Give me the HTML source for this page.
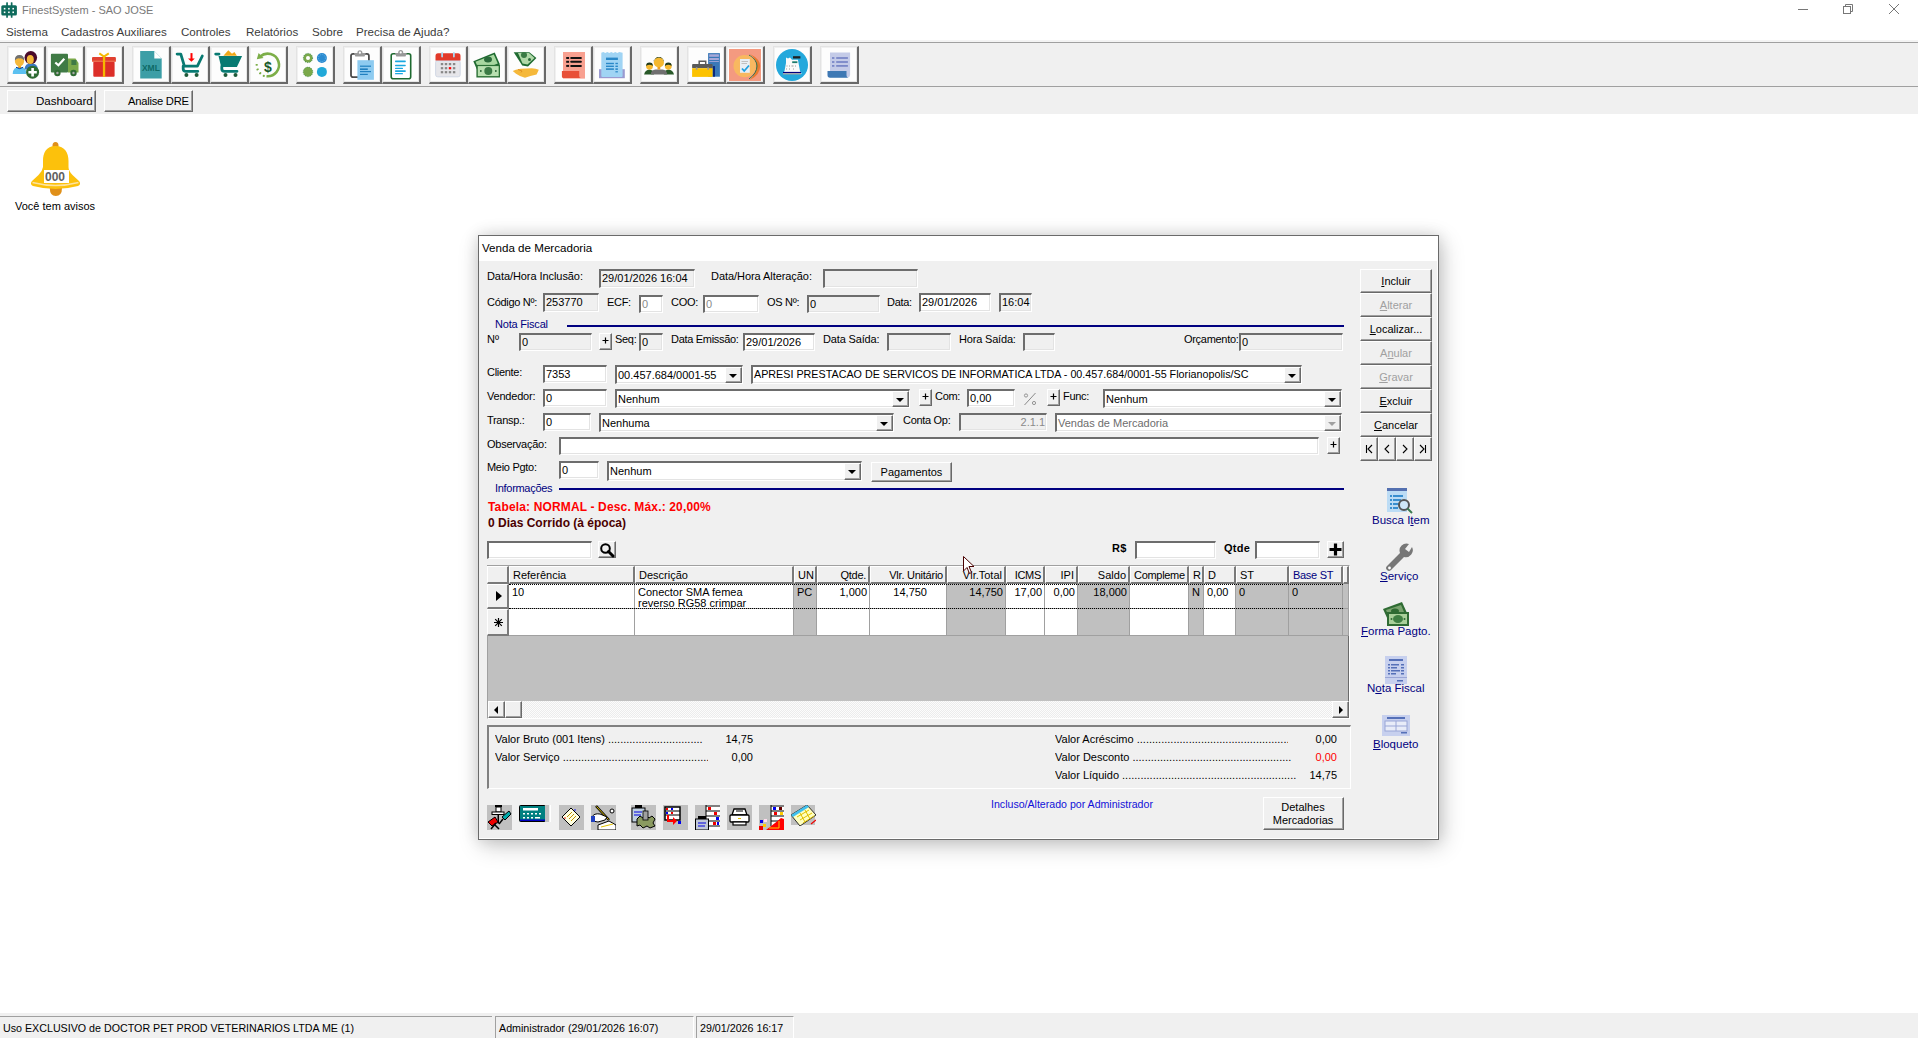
<!DOCTYPE html><html><head><meta charset="utf-8"><style>
html,body{margin:0;padding:0;}
body{width:1918px;height:1038px;position:relative;overflow:hidden;background:#fff;font-family:"Liberation Sans",sans-serif;}
.a{position:absolute;box-sizing:border-box;}
.t{position:absolute;white-space:nowrap;font-family:"Liberation Sans",sans-serif;}
.ed{position:absolute;box-sizing:border-box;border-style:solid;border-width:2px 1px 1px 2px;border-color:#6d6d6d #fff #fff #6d6d6d;box-shadow:inset -1px -1px 0 #e3e3e3;}
.rb{position:absolute;box-sizing:border-box;border-style:solid;border-width:1px;border-color:#fff #696969 #696969 #fff;box-shadow:inset -1px -1px 0 #a0a0a0;}
</style></head><body>
<div class="a" style="left:0px;top:0px;width:1918px;height:42px;background:#fff"></div>
<div class="t" style="left:22px;top:4px;font-size:11px;line-height:13px;color:#7a7a7a;">FinestSystem - SAO JOSE</div>
<div class="t" style="left:6px;top:25px;font-size:11.6px;line-height:13px;color:#3c3c3c;">Sistema</div>
<div class="t" style="left:61px;top:25px;font-size:11.6px;line-height:13px;color:#3c3c3c;">Cadastros Auxiliares</div>
<div class="t" style="left:181px;top:25px;font-size:11.6px;line-height:13px;color:#3c3c3c;">Controles</div>
<div class="t" style="left:246px;top:25px;font-size:11.6px;line-height:13px;color:#3c3c3c;">Relatórios</div>
<div class="t" style="left:312px;top:25px;font-size:11.6px;line-height:13px;color:#3c3c3c;">Sobre</div>
<div class="t" style="left:356px;top:25px;font-size:11.6px;line-height:13px;color:#3c3c3c;">Precisa de Ajuda?</div>
<div class="a" style="left:0px;top:40px;width:1918px;height:2px;background:#f4f4f4"></div>
<div class="a" style="left:0px;top:42px;width:1918px;height:1px;background:#a0a0a0"></div>
<div class="a" style="left:0px;top:43px;width:1918px;height:43px;background:#f0f0f0"></div>
<div class="a" style="left:0px;top:86px;width:1918px;height:1px;background:#a0a0a0"></div>
<div class="a" style="left:0px;top:87px;width:1918px;height:27px;background:#f0f0f0"></div>
<div class="a" style="left:7px;top:46px;width:39px;height:38px;background:#fdfdfd;border-style:solid;border-width:1px 2px 2px 1px;border-color:#e3e3e3 #696969 #696969 #e3e3e3;box-shadow:inset -1px -1px 0 #e6e6e6, inset 1px 1px 0 #f0f0f0"></div>
<svg class="a" style="left:10px;top:49px" width="32" height="32" viewBox="0 0 32 32"><path d="M2.7 25 Q2.7 18 9.6 18 Q16.5 18 16.5 25 Z" fill="#5bc0f0"/><rect x="8.3" y="16" width="2.6" height="3" fill="#f5a010"/><path d="M6 18.3 Q9.6 21 13.2 18.3" stroke="#0a3a90" stroke-width="1" fill="none"/>
<ellipse cx="9.5" cy="12" rx="4.6" ry="5.4" fill="#f5b83a"/><path d="M4.9 11.5 Q4.6 6 9.5 6 Q14.4 6 14.1 11.5 Q12 8.8 9.5 9.4 Q7 8.8 4.9 11.5 Z" fill="#6f6f6f"/>
<path d="M14.5 20.4 Q14.8 14.3 21 14.3 Q27.6 14.3 27.9 20.4 Z" fill="#3a7ac0"/>
<ellipse cx="20.8" cy="8.6" rx="6.3" ry="6.5" fill="#4a0a2a"/><ellipse cx="20.3" cy="10.5" rx="3.5" ry="4.6" fill="#f5b83a"/>
<circle cx="22.6" cy="23.2" r="6.5" fill="#2f6b33"/><path d="M22.6 19 V27.4 M18.4 23.2 H26.8" stroke="#fff" stroke-width="2.6"/></svg>
<div class="a" style="left:46px;top:46px;width:39px;height:38px;background:#fdfdfd;border-style:solid;border-width:1px 2px 2px 1px;border-color:#e3e3e3 #696969 #696969 #e3e3e3;box-shadow:inset -1px -1px 0 #e6e6e6, inset 1px 1px 0 #f0f0f0"></div>
<svg class="a" style="left:49px;top:49px" width="32" height="32" viewBox="0 0 32 32"><rect x="1.9" y="4.7" width="17.1" height="18.9" rx="1" fill="#3f7a45"/><path d="M19 9.4 H26.5 L29.5 14 V23.6 H19 Z" fill="#7aa84a"/><rect x="22.4" y="11" width="5" height="5" fill="#3f7a45"/>
<circle cx="8.4" cy="24" r="3.2" fill="#2f6b33"/><circle cx="8.4" cy="24" r="1.2" fill="#aaa"/><circle cx="24.5" cy="24" r="3.2" fill="#2f6b33"/><circle cx="24.5" cy="24" r="1.2" fill="#aaa"/>
<path d="M6.3 13.5 L9.4 16.3 L15.3 9.8" stroke="#fff" stroke-width="2.2" fill="none"/></svg>
<div class="a" style="left:85px;top:46px;width:39px;height:38px;background:#fdfdfd;border-style:solid;border-width:1px 2px 2px 1px;border-color:#e3e3e3 #696969 #696969 #e3e3e3;box-shadow:inset -1px -1px 0 #e6e6e6, inset 1px 1px 0 #f0f0f0"></div>
<svg class="a" style="left:88px;top:49px" width="32" height="32" viewBox="0 0 32 32"><rect x="5.3" y="12.8" width="21.3" height="15" rx="1" fill="#dc2e28"/><rect x="4" y="7.9" width="23.9" height="4.9" rx="1" fill="#e04030"/><rect x="4" y="11.6" width="23.9" height="1" fill="#f0704a"/>
<rect x="14.9" y="7" width="2.3" height="20.8" fill="#f5b800"/><path d="M11.3 4.3 L16 7.5 L20.8 4.3" stroke="#f5b800" stroke-width="2" fill="none"/></svg>
<div class="a" style="left:132px;top:46px;width:39px;height:38px;background:#fdfdfd;border-style:solid;border-width:1px 2px 2px 1px;border-color:#e3e3e3 #696969 #696969 #e3e3e3;box-shadow:inset -1px -1px 0 #e6e6e6, inset 1px 1px 0 #f0f0f0"></div>
<svg class="a" style="left:135px;top:49px" width="32" height="32" viewBox="0 0 32 32"><path d="M5.2 2 H19.3 L26.7 9.5 V29.6 H5.2 Z" fill="#3c9ea6"/><path d="M19.3 2 V9.5 H26.7 Z" fill="#fff"/>
<text x="15.9" y="22" font-family="Liberation Sans" font-weight="bold" font-size="8.5" text-anchor="middle" fill="#0e6a66">XML</text></svg>
<div class="a" style="left:171px;top:46px;width:39px;height:38px;background:#fdfdfd;border-style:solid;border-width:1px 2px 2px 1px;border-color:#e3e3e3 #696969 #696969 #e3e3e3;box-shadow:inset -1px -1px 0 #e6e6e6, inset 1px 1px 0 #f0f0f0"></div>
<svg class="a" style="left:174px;top:49px" width="32" height="32" viewBox="0 0 32 32"><path d="M3.1 5.1 H6.8 L10.4 17.1 H23.4 L28.3 7" stroke="#087a72" stroke-width="2.8" fill="none" stroke-linecap="round" stroke-linejoin="round"/>
<path d="M9.2 17.1 V20 Q9.2 22.3 12 22.3 H23.8" stroke="#087a72" stroke-width="2.8" fill="none" stroke-linecap="round"/>
<circle cx="12.4" cy="26" r="2" fill="#1e5a3a"/><circle cx="22.6" cy="26" r="2" fill="#1e5a3a"/>
<rect x="16.5" y="4.1" width="2" height="6" fill="#f00"/><path d="M14 9.4 H20.8 L17.4 12.7 Z" fill="#f00"/></svg>
<div class="a" style="left:210px;top:46px;width:39px;height:38px;background:#fdfdfd;border-style:solid;border-width:1px 2px 2px 1px;border-color:#e3e3e3 #696969 #696969 #e3e3e3;box-shadow:inset -1px -1px 0 #e6e6e6, inset 1px 1px 0 #f0f0f0"></div>
<svg class="a" style="left:213px;top:49px" width="32" height="32" viewBox="0 0 32 32"><path d="M10.4 6.8 L15.3 1.3 L19 4.7 L21.4 3.1 L23.9 6.8 Z" fill="#f0a818"/>
<path d="M2.7 5.1 H6" stroke="#087a72" stroke-width="2.8" stroke-linecap="round"/><path d="M5.5 7 H29.1 L23.9 18 H8.2 Z" fill="#087a72"/>
<path d="M8.8 17.5 V20 Q8.8 22.3 11.6 22.3 H24" stroke="#087a72" stroke-width="2.8" fill="none" stroke-linecap="round"/>
<circle cx="12.5" cy="26" r="2" fill="#1e5a3a"/><circle cx="22.5" cy="26" r="2" fill="#1e5a3a"/></svg>
<div class="a" style="left:249px;top:46px;width:39px;height:38px;background:#fdfdfd;border-style:solid;border-width:1px 2px 2px 1px;border-color:#e3e3e3 #696969 #696969 #e3e3e3;box-shadow:inset -1px -1px 0 #e6e6e6, inset 1px 1px 0 #f0f0f0"></div>
<svg class="a" style="left:252px;top:49px" width="32" height="32" viewBox="0 0 32 32"><path d="M8.2 7.5 A11.3 11.3 0 1 1 14.5 27.2" stroke="#7cae48" stroke-width="2.6" fill="none"/>
<path d="M4.8 10.3 L6.6 4 L11.5 9 Z" fill="#7cae48"/>
<g fill="#7cae48"><rect x="3.5" y="15" width="2.4" height="1.8" rx="0.8"/><rect x="4.4" y="19.5" width="2.4" height="1.8" rx="0.8" transform="rotate(-20 5.6 20.4)"/><rect x="7" y="23.3" width="2.4" height="1.8" rx="0.8" transform="rotate(-40 8.2 24.2)"/><rect x="10.8" y="25.8" width="2" height="2.2" rx="0.8" transform="rotate(-65 11.8 26.9)"/></g>
<text x="15.8" y="22.5" font-family="Liberation Sans" font-weight="bold" font-size="14" text-anchor="middle" fill="#1a5a2a">$</text></svg>
<div class="a" style="left:296px;top:46px;width:39px;height:38px;background:#fdfdfd;border-style:solid;border-width:1px 2px 2px 1px;border-color:#e3e3e3 #696969 #696969 #e3e3e3;box-shadow:inset -1px -1px 0 #e6e6e6, inset 1px 1px 0 #f0f0f0"></div>
<svg class="a" style="left:299px;top:49px" width="32" height="32" viewBox="0 0 32 32"><circle cx="9" cy="9" r="4.6" fill="#7aa84a" stroke="#1e7a3a" stroke-width="0.8" stroke-dasharray="1 1.3"/><circle cx="9" cy="9" r="2" fill="#fff"/>
<circle cx="22.9" cy="9" r="5" fill="#2a8ad0"/><circle cx="22.9" cy="9" r="3.5" fill="none" stroke="#7cc8f0" stroke-width="0.8" stroke-dasharray="0.8 1.2"/>
<circle cx="9" cy="22.9" r="4.8" fill="#7aa84a" stroke="#1e7a3a" stroke-width="0.6" stroke-dasharray="1 1.3"/>
<circle cx="22.9" cy="22.9" r="5" fill="#20a8d8"/></svg>
<div class="a" style="left:343px;top:46px;width:39px;height:38px;background:#fdfdfd;border-style:solid;border-width:1px 2px 2px 1px;border-color:#e3e3e3 #696969 #696969 #e3e3e3;box-shadow:inset -1px -1px 0 #e6e6e6, inset 1px 1px 0 #f0f0f0"></div>
<svg class="a" style="left:346px;top:49px" width="32" height="32" viewBox="0 0 32 32"><rect x="5" y="4.8" width="17.9" height="23.4" rx="2" fill="#fff" stroke="#4a4a4a" stroke-width="1.8"/>
<path d="M8 4.1 H19.8 L18.5 7.6 H9.3 Z" fill="#999"/><circle cx="13.9" cy="3.7" r="2.5" fill="#999"/><circle cx="13.9" cy="3.7" r="1.1" fill="#fff"/>
<rect x="11.4" y="11.2" width="16.5" height="19.6" fill="#8ecbf0"/>
<g fill="#2080c0"><rect x="14" y="16.6" width="11" height="1.2"/><rect x="14" y="19.4" width="7.8" height="1.6"/><rect x="14" y="22" width="11" height="1.2"/><rect x="14" y="24.8" width="7.8" height="1.2"/></g></svg>
<div class="a" style="left:382px;top:46px;width:39px;height:38px;background:#fdfdfd;border-style:solid;border-width:1px 2px 2px 1px;border-color:#e3e3e3 #696969 #696969 #e3e3e3;box-shadow:inset -1px -1px 0 #e6e6e6, inset 1px 1px 0 #f0f0f0"></div>
<svg class="a" style="left:385px;top:49px" width="32" height="32" viewBox="0 0 32 32"><rect x="6.2" y="4.7" width="19.5" height="25" rx="2" fill="#fff" stroke="#1e6a30" stroke-width="1.6"/>
<path d="M10 4.1 H21.8 L20.5 7.6 H11.3 Z" fill="#999"/><circle cx="15.7" cy="3.4" r="2.5" fill="#999"/><circle cx="15.7" cy="3.4" r="1.1" fill="#fff"/>
<g fill="#1aa8e0"><rect x="10" y="11.6" width="10.8" height="1.6" rx="0.6"/><rect x="10" y="15.8" width="10.8" height="1.4" rx="0.6"/><rect x="10" y="18.8" width="8" height="1.2" rx="0.6"/><rect x="10" y="21.3" width="10.8" height="1.6" rx="0.6"/><rect x="10" y="24.1" width="8" height="1.2" rx="0.6"/></g></svg>
<div class="a" style="left:429px;top:46px;width:39px;height:38px;background:#fdfdfd;border-style:solid;border-width:1px 2px 2px 1px;border-color:#e3e3e3 #696969 #696969 #e3e3e3;box-shadow:inset -1px -1px 0 #e6e6e6, inset 1px 1px 0 #f0f0f0"></div>
<svg class="a" style="left:432px;top:49px" width="32" height="32" viewBox="0 0 32 32"><rect x="3.6" y="11.4" width="24.6" height="16.4" rx="2" fill="#e6e6ea" stroke="#c8d0e0" stroke-width="0.8"/><rect x="3.6" y="11.4" width="24.6" height="1" fill="#d0e4f4"/>
<path d="M3.5 11.4 V7 Q3.5 4.3 6 4.3 H26 Q28.5 4.3 28.5 7 V11.4 Z" fill="#e23a2a"/>
<rect x="9.2" y="3" width="1.8" height="5.4" rx="0.9" fill="#a8d8f0"/><rect x="21" y="3" width="1.8" height="5.4" rx="0.9" fill="#a8d8f0"/>
<g fill="#888"><rect x="8.8" y="14" width="2.4" height="2.2"/><rect x="12.8" y="14" width="2.4" height="2.2"/><rect x="16.8" y="14" width="2.4" height="2.2"/><rect x="20.9" y="14" width="2.4" height="2.2"/>
<rect x="8.8" y="18.1" width="2.4" height="2.2"/><rect x="12.8" y="18.1" width="2.4" height="2.2"/><rect x="20.9" y="18.1" width="2.4" height="2.2"/>
<rect x="8.8" y="22.1" width="2.4" height="2.2"/><rect x="12.8" y="22.1" width="2.4" height="2.2"/><rect x="16.8" y="22.1" width="2.4" height="2.2"/><rect x="20.9" y="22.1" width="2.4" height="2.2"/></g>
<rect x="16.8" y="18.1" width="2.4" height="2.2" fill="#f00"/></svg>
<div class="a" style="left:468px;top:46px;width:39px;height:38px;background:#fdfdfd;border-style:solid;border-width:1px 2px 2px 1px;border-color:#e3e3e3 #696969 #696969 #e3e3e3;box-shadow:inset -1px -1px 0 #e6e6e6, inset 1px 1px 0 #f0f0f0"></div>
<svg class="a" style="left:471px;top:49px" width="32" height="32" viewBox="0 0 32 32"><path d="M2.3 12.3 L23.7 3.5 L29 15.5 L7.6 24.3 Z" fill="#1e6a30"/><path d="M4.5 12.8 L22.8 5.5 L26.8 14.6 L8.5 21.9 Z" fill="#a8d8a0"/><ellipse cx="17" cy="10.5" rx="4" ry="3" fill="#2a6a3a"/>
<rect x="5.4" y="15.9" width="23.6" height="12.6" fill="#2a7035"/><rect x="6.8" y="17.1" width="20.9" height="10" fill="#b8e0b0"/><circle cx="17.3" cy="22" r="4" fill="#3a7a45"/>
<rect x="9" y="21.2" width="1.6" height="1.6" fill="#1e5a2a"/><rect x="24" y="21.2" width="1.6" height="1.6" fill="#1e5a2a"/></svg>
<div class="a" style="left:507px;top:46px;width:39px;height:38px;background:#fdfdfd;border-style:solid;border-width:1px 2px 2px 1px;border-color:#e3e3e3 #696969 #696969 #e3e3e3;box-shadow:inset -1px -1px 0 #e6e6e6, inset 1px 1px 0 #f0f0f0"></div>
<svg class="a" style="left:510px;top:49px" width="32" height="32" viewBox="0 0 32 32"><path d="M3.7 3.2 L19.4 3.2 L26.4 9 L18 17.5 L12.2 16.4 Z" fill="#1e6a30"/><path d="M8 4 L19 4 L24.5 9 L17.5 15.5 L12.5 14.5 Z" fill="#b0d8a8"/><circle cx="14" cy="6" r="3" fill="#3a7a45"/><circle cx="19.5" cy="10.5" r="1.5" fill="#2a6a3a"/>
<path d="M2.8 22 Q5 20.5 10.5 19.8 L21.7 19.3 Q26 19.5 28.8 20.7 L26.6 25.6 Q20 27 15 28.7 Q9 27 6 24.7 Z" fill="#f5b83a"/><path d="M8 20.5 L12 22 L11 23.5" stroke="#e09020" stroke-width="1" fill="none"/></svg>
<div class="a" style="left:554px;top:46px;width:39px;height:38px;background:#fdfdfd;border-style:solid;border-width:1px 2px 2px 1px;border-color:#e3e3e3 #696969 #696969 #e3e3e3;box-shadow:inset -1px -1px 0 #e6e6e6, inset 1px 1px 0 #f0f0f0"></div>
<svg class="a" style="left:557px;top:49px" width="32" height="32" viewBox="0 0 32 32"><rect x="6" y="3" width="22" height="26.6" fill="#f8a090"/><path d="M4.9 22 H22.2 V27 Q22.2 29 24 29 H6.5 Q4.9 29 4.9 27.5 Z" fill="#e85038"/>
<g fill="#111"><rect x="9.2" y="8" width="2.9" height="2"/><rect x="13.2" y="8" width="11.7" height="2" rx="1"/><rect x="9.2" y="11.8" width="2.9" height="2"/><rect x="13.2" y="11.8" width="11.7" height="2" rx="1"/><rect x="9.2" y="15.9" width="2.9" height="2"/><rect x="13.2" y="15.9" width="11.7" height="2" rx="1"/></g></svg>
<div class="a" style="left:593px;top:46px;width:39px;height:38px;background:#fdfdfd;border-style:solid;border-width:1px 2px 2px 1px;border-color:#e3e3e3 #696969 #696969 #e3e3e3;box-shadow:inset -1px -1px 0 #e6e6e6, inset 1px 1px 0 #f0f0f0"></div>
<svg class="a" style="left:596px;top:49px" width="32" height="32" viewBox="0 0 32 32"><rect x="3" y="20.2" width="25.8" height="9" fill="#9a9ad0"/>
<path d="M5.3 3.8 L7.3 3 L9.3 4 L11.3 3 L13.3 4 L15.3 3 L17.3 4 L19.3 3 L21.3 4 L23.3 3 L26.6 3.8 V27 Q26.6 28 25.6 28 H6.3 Q5.3 28 5.3 27 Z" fill="#a0d4f4"/>
<g fill="#2a88c8"><rect x="10" y="8.6" width="11.9" height="2.4"/><rect x="10" y="13.8" width="7.9" height="1.4"/><rect x="19.4" y="13.8" width="2.5" height="1.4"/><rect x="10" y="16.6" width="7.9" height="1.4"/><rect x="19.4" y="16.6" width="2.5" height="1.4"/><rect x="10" y="19.3" width="7.9" height="1.6"/><rect x="19.4" y="19.3" width="2.5" height="1.6"/><rect x="19.4" y="22.2" width="2.5" height="1.2"/></g></svg>
<div class="a" style="left:640px;top:46px;width:39px;height:38px;background:#fdfdfd;border-style:solid;border-width:1px 2px 2px 1px;border-color:#e3e3e3 #696969 #696969 #e3e3e3;box-shadow:inset -1px -1px 0 #e6e6e6, inset 1px 1px 0 #f0f0f0"></div>
<svg class="a" style="left:643px;top:49px" width="32" height="32" viewBox="0 0 32 32"><path d="M1.1 25.6 Q2 21 6.5 20.5 Q10 21 11 23 V25.6 Z" fill="#2a5a2a"/><path d="M20.9 23 Q22 21 25.3 20.5 Q30 21 31 25.6 H20.9 Z" fill="#2a5a2a"/>
<circle cx="6.5" cy="17.3" r="3.4" fill="#f5b830"/><path d="M3.1 17 A3.4 3.4 0 0 1 9.9 17 Q6.5 14.5 3.1 17 Z" fill="#1e3a1e"/>
<circle cx="25.3" cy="17.3" r="3.4" fill="#f5b830"/><path d="M21.9 17 A3.4 3.4 0 0 1 28.7 17 Q25.3 14.5 21.9 17 Z" fill="#1e3a1e"/>
<path d="M7.8 25.6 Q8 21 12.5 20.5 H19.5 Q24 21 24.2 25.6 Z" fill="#707070"/>
<circle cx="15.9" cy="13.4" r="5.1" fill="#f5b830"/><path d="M10.8 13 A5.1 5.1 0 0 1 21 13 L21 11 Q16 6 10.8 11 Z" fill="#1e3a1e"/><rect x="14.5" y="18" width="2.8" height="2.5" fill="#f0a020"/></svg>
<div class="a" style="left:687px;top:46px;width:39px;height:38px;background:#fdfdfd;border-style:solid;border-width:1px 2px 2px 1px;border-color:#e3e3e3 #696969 #696969 #e3e3e3;box-shadow:inset -1px -1px 0 #e6e6e6, inset 1px 1px 0 #f0f0f0"></div>
<svg class="a" style="left:690px;top:49px" width="32" height="32" viewBox="0 0 32 32"><rect x="18.1" y="4.1" width="11.8" height="23.6" fill="#3a78b8"/><g fill="#a8a8d8"><rect x="19.2" y="5.3" width="9.7" height="2.5"/><rect x="19.2" y="9" width="9.7" height="2"/><rect x="19.2" y="12" width="9.7" height="0.9"/></g><rect x="23" y="17.1" width="2" height="10.6" fill="#0a2a80"/>
<path d="M9.2 15.1 V12.3 H15.7 V15.1" stroke="#5a5a5a" stroke-width="1.5" fill="none"/><rect x="2.1" y="15.1" width="20.5" height="4.1" rx="0.8" fill="#5a5a5a"/><rect x="2.1" y="19.2" width="20.5" height="8.7" fill="#fcc200"/>
<rect x="5.8" y="18.3" width="1.6" height="2.5" fill="#999"/><rect x="17.3" y="18.3" width="1.6" height="2.5" fill="#999"/></svg>
<div class="a" style="left:726px;top:46px;width:39px;height:38px;background:#fdfdfd;border-style:solid;border-width:1px 2px 2px 1px;border-color:#e3e3e3 #696969 #696969 #e3e3e3;box-shadow:inset -1px -1px 0 #e6e6e6, inset 1px 1px 0 #f0f0f0"></div>
<svg class="a" style="left:729px;top:49px" width="32" height="32" viewBox="0 0 32 32"><rect x="0" y="0" width="32" height="32" fill="#f49a80"/>
<path d="M21 5 Q31 10 31.2 17 Q31 26 21 31 Q27 24 27.5 17 Q27 10 21 5 Z" fill="#e87a30"/><path d="M20 6 Q28 11 28 17 Q28 24 20 30" stroke="#2a7a50" stroke-width="1" fill="none"/>
<circle cx="15.7" cy="17.1" r="11.2" fill="#f8b860"/>
<rect x="11" y="10" width="9.8" height="13.8" fill="#e8eef4"/><path d="M12.5 12.5 H19 M12.5 14.5 H18" stroke="#c0c0c0" stroke-width="1"/>
<path d="M13 19.5 L15.2 22 L20 16.5" stroke="#20a0e0" stroke-width="1.8" fill="none"/></svg>
<div class="a" style="left:773px;top:46px;width:39px;height:38px;background:#fdfdfd;border-style:solid;border-width:1px 2px 2px 1px;border-color:#e3e3e3 #696969 #696969 #e3e3e3;box-shadow:inset -1px -1px 0 #e6e6e6, inset 1px 1px 0 #f0f0f0"></div>
<svg class="a" style="left:776px;top:49px" width="32" height="32" viewBox="0 0 32 32"><circle cx="16" cy="16" r="16" fill="#24a8dc"/>
<path d="M10 8.6 L12 9.5 L14 8.5 L16 10.8 L21.9 10.8 L24 22 L25.7 25 H7 L8.5 22 L10 14 Z" fill="#fafafa"/>
<rect x="17" y="7.2" width="7.4" height="2.3" fill="#202020"/><rect x="16.2" y="12.3" width="5.2" height="1.8" fill="#1e7a6a"/>
<g fill="#999"><rect x="10.5" y="16.5" width="1" height="1"/><rect x="13" y="16.5" width="1" height="1"/><rect x="15.5" y="16.5" width="2" height="1"/><rect x="19" y="16.5" width="1" height="1"/><rect x="10" y="19.5" width="1" height="1"/><rect x="13" y="19.5" width="1" height="1"/><rect x="17" y="19.5" width="1" height="1"/></g>
<rect x="7" y="22.9" width="18" height="1.3" fill="#000080"/><rect x="7" y="24.2" width="18" height="1.3" fill="#a0a0a0"/></svg>
<div class="a" style="left:820px;top:46px;width:39px;height:38px;background:#fdfdfd;border-style:solid;border-width:1px 2px 2px 1px;border-color:#e3e3e3 #696969 #696969 #e3e3e3;box-shadow:inset -1px -1px 0 #e6e6e6, inset 1px 1px 0 #f0f0f0"></div>
<svg class="a" style="left:823px;top:49px" width="32" height="32" viewBox="0 0 32 32"><path d="M7 3.4 H27.1 V26 Q27.1 28.3 24.8 28.3 H7 Z" fill="#c4cbe8"/><path d="M4.5 22 H23.5 V26 Q23.5 28.7 26 28.7 H7 Q4.5 28.7 4.5 26 Z" fill="#3e78b4"/>
<g fill="#7a88c8"><rect x="9" y="8.1" width="2.4" height="1.8"/><rect x="13.2" y="8.1" width="11.7" height="1.8"/><rect x="9" y="12.1" width="2.4" height="1.8"/><rect x="13.2" y="12.1" width="11.7" height="1.8"/><rect x="9" y="16" width="2.4" height="1.8"/><rect x="13.2" y="16" width="11.7" height="1.8"/></g></svg>
<div class="rb" style="left:7px;top:90px;width:89px;height:22px;background:#f0f0f0"></div>
<div class="t" style="left:36px;top:94px;font-size:11.6px;line-height:13px;color:#000;">Dashboard</div>
<div class="rb" style="left:104px;top:90px;width:89px;height:22px;background:#f0f0f0"></div>
<div class="t" style="left:128px;top:95px;font-size:11.2px;line-height:13px;color:#000;letter-spacing:-0.25px;">Analise DRE</div>
<div class="a" style="left:0px;top:1013px;width:1918px;height:25px;background:#f0f0f0"></div>
<div class="a" style="left:478px;top:235px;width:961px;height:605px;background:#f0f0f0;border:1px solid #6a6a6a;box-shadow:0 0 14px rgba(0,0,0,0.13), 3px 6px 22px rgba(0,0,0,0.2)"></div>
<div class="a" style="left:479px;top:236px;width:959px;height:603px;border-right:1px solid #fff;border-bottom:1px solid #fff"></div>
<div class="a" style="left:479px;top:236px;width:959px;height:25px;background:#fff"></div>
<div class="t" style="left:482px;top:241px;font-size:11.6px;line-height:13px;color:#000;">Venda de Mercadoria</div>
<div class="t" style="left:487px;top:270px;font-size:11px;line-height:13px;color:#000;letter-spacing:-0.07px;">Data/Hora Inclusão:</div>
<div class="ed" style="left:599px;top:269px;width:96px;height:19px;background:#f0f0f0"></div>
<div class="t" style="left:602px;top:272px;font-size:11px;line-height:13px;color:#000;">29/01/2026 16:04</div>
<div class="t" style="left:711px;top:270px;font-size:11px;line-height:13px;color:#000;letter-spacing:-0.06px;">Data/Hora Alteração:</div>
<div class="ed" style="left:823px;top:269px;width:95px;height:19px;background:#f0f0f0"></div>
<div class="t" style="left:487px;top:296px;font-size:11px;line-height:13px;color:#000;letter-spacing:-0.30px;">Código Nº:</div>
<div class="ed" style="left:543px;top:293px;width:56px;height:19px;background:#f0f0f0"></div>
<div class="t" style="left:546px;top:296px;font-size:11px;line-height:13px;color:#000;">253770</div>
<div class="t" style="left:607px;top:296px;font-size:11px;line-height:13px;color:#000;letter-spacing:-0.30px;">ECF:</div>
<div class="ed" style="left:639px;top:295px;width:24px;height:18px;background:#fff"></div>
<div class="t" style="left:642px;top:298px;font-size:11px;line-height:13px;color:#8a8a8a;">0</div>
<div class="t" style="left:671px;top:296px;font-size:11px;line-height:13px;color:#000;letter-spacing:-0.30px;">COO:</div>
<div class="ed" style="left:703px;top:295px;width:56px;height:18px;background:#fff"></div>
<div class="t" style="left:706px;top:298px;font-size:11px;line-height:13px;color:#8a8a8a;">0</div>
<div class="t" style="left:767px;top:296px;font-size:11px;line-height:13px;color:#000;letter-spacing:-0.30px;">OS Nº:</div>
<div class="ed" style="left:807px;top:295px;width:73px;height:18px;background:#f0f0f0"></div>
<div class="t" style="left:810px;top:298px;font-size:11px;line-height:13px;color:#000;">0</div>
<div class="t" style="left:887px;top:296px;font-size:11px;line-height:13px;color:#000;letter-spacing:-0.30px;">Data:</div>
<div class="ed" style="left:919px;top:293px;width:72px;height:19px;background:#fff"></div>
<div class="t" style="left:922px;top:296px;font-size:11px;line-height:13px;color:#000;">29/01/2026</div>
<div class="ed" style="left:999px;top:293px;width:33px;height:19px;background:#f0f0f0"></div>
<div class="t" style="left:1002px;top:296px;font-size:11px;line-height:13px;color:#000;">16:04</div>
<div class="t" style="left:495px;top:318px;font-size:11px;line-height:13px;color:#000080;letter-spacing:-0.20px;">Nota Fiscal</div>
<div class="a" style="left:567px;top:325px;width:777px;height:2px;background:#000080"></div>
<div class="t" style="left:487px;top:333px;font-size:11px;line-height:13px;color:#000;">Nº</div>
<div class="ed" style="left:519px;top:333px;width:73px;height:18px;background:#f0f0f0"></div>
<div class="t" style="left:522px;top:336px;font-size:11px;line-height:13px;color:#000;">0</div>
<div class="rb" style="left:599px;top:333px;width:13px;height:17px;background:#f0f0f0"></div>
<svg class="a" style="left:602px;top:337px" width="7" height="7" viewBox="0 0 7 7"><path d="M3.5 0.5 V6.5 M0.5 3.5 H6.5" stroke="#000" stroke-width="1.2"/></svg>
<div class="t" style="left:615px;top:333px;font-size:11px;line-height:13px;color:#000;letter-spacing:-0.30px;">Seq:</div>
<div class="ed" style="left:639px;top:333px;width:24px;height:18px;background:#f0f0f0"></div>
<div class="t" style="left:642px;top:336px;font-size:11px;line-height:13px;color:#000;">0</div>
<div class="t" style="left:671px;top:333px;font-size:11px;line-height:13px;color:#000;letter-spacing:-0.30px;">Data Emissão:</div>
<div class="ed" style="left:743px;top:333px;width:72px;height:18px;background:#fff"></div>
<div class="t" style="left:746px;top:336px;font-size:11px;line-height:13px;color:#000;">29/01/2026</div>
<div class="t" style="left:823px;top:333px;font-size:11px;line-height:13px;color:#000;letter-spacing:-0.16px;">Data Saída:</div>
<div class="ed" style="left:887px;top:333px;width:64px;height:18px;background:#f0f0f0"></div>
<div class="t" style="left:959px;top:333px;font-size:11px;line-height:13px;color:#000;letter-spacing:-0.18px;">Hora Saída:</div>
<div class="ed" style="left:1023px;top:333px;width:32px;height:18px;background:#f0f0f0"></div>
<div class="t" style="left:1184px;top:333px;font-size:11px;line-height:13px;color:#000;letter-spacing:-0.30px;">Orçamento:</div>
<div class="ed" style="left:1239px;top:333px;width:104px;height:18px;background:#f0f0f0"></div>
<div class="t" style="left:1242px;top:336px;font-size:11px;line-height:13px;color:#000;">0</div>
<div class="t" style="left:487px;top:366px;font-size:11px;line-height:13px;color:#000;letter-spacing:-0.30px;">Cliente:</div>
<div class="ed" style="left:543px;top:365px;width:64px;height:18px;background:#fff"></div>
<div class="t" style="left:546px;top:368px;font-size:11px;line-height:13px;color:#000;">7353</div>
<div class="ed" style="left:615px;top:365px;width:128px;height:19px;background:#fff"></div>
<div class="rb" style="left:725px;top:367px;width:17px;height:16px;background:#f0f0f0"></div>
<div class="a" style="left:729px;top:374px;width:0;height:0;border-left:4px solid transparent;border-right:4px solid transparent;border-top:4px solid #000"></div>
<div class="t" style="left:618px;top:369px;font-size:11px;line-height:13px;color:#000;">00.457.684/0001-55</div>
<div class="ed" style="left:751px;top:365px;width:551px;height:19px;background:#fff"></div>
<div class="rb" style="left:1284px;top:367px;width:17px;height:16px;background:#f0f0f0"></div>
<div class="a" style="left:1288px;top:374px;width:0;height:0;border-left:4px solid transparent;border-right:4px solid transparent;border-top:4px solid #000"></div>
<div class="t" style="left:754px;top:368px;font-size:10.75px;line-height:13px;color:#000;">APRESI PRESTACAO DE SERVICOS DE INFORMATICA LTDA - 00.457.684/0001-55 Florianopolis/SC</div>
<div class="t" style="left:487px;top:390px;font-size:11px;line-height:13px;color:#000;letter-spacing:-0.21px;">Vendedor:</div>
<div class="ed" style="left:543px;top:389px;width:64px;height:18px;background:#fff"></div>
<div class="t" style="left:546px;top:392px;font-size:11px;line-height:13px;color:#000;">0</div>
<div class="ed" style="left:615px;top:389px;width:295px;height:19px;background:#fff"></div>
<div class="rb" style="left:892px;top:391px;width:17px;height:16px;background:#f0f0f0"></div>
<div class="a" style="left:896px;top:398px;width:0;height:0;border-left:4px solid transparent;border-right:4px solid transparent;border-top:4px solid #000"></div>
<div class="t" style="left:618px;top:393px;font-size:11px;line-height:13px;color:#000;">Nenhum</div>
<div class="rb" style="left:919px;top:389px;width:13px;height:17px;background:#f0f0f0"></div>
<svg class="a" style="left:922px;top:393px" width="7" height="7" viewBox="0 0 7 7"><path d="M3.5 0.5 V6.5 M0.5 3.5 H6.5" stroke="#000" stroke-width="1.2"/></svg>
<div class="t" style="left:935px;top:390px;font-size:11px;line-height:13px;color:#000;letter-spacing:-0.30px;">Com:</div>
<div class="ed" style="left:967px;top:389px;width:48px;height:18px;background:#fff"></div>
<div class="t" style="left:970px;top:392px;font-size:11px;line-height:13px;color:#000;">0,00</div>
<svg class="a" style="left:1023px;top:392px" width="14" height="14" viewBox="0 0 14 14"><path d="M1.5 13 L12.5 1" stroke="#8a8a8a" stroke-width="1"/><circle cx="3" cy="3.5" r="1.6" fill="none" stroke="#8a8a8a" stroke-width="0.9"/><circle cx="11" cy="11" r="1.6" fill="none" stroke="#8a8a8a" stroke-width="0.9"/></svg>
<div class="rb" style="left:1047px;top:389px;width:13px;height:17px;background:#f0f0f0"></div>
<svg class="a" style="left:1050px;top:393px" width="7" height="7" viewBox="0 0 7 7"><path d="M3.5 0.5 V6.5 M0.5 3.5 H6.5" stroke="#000" stroke-width="1.2"/></svg>
<div class="t" style="left:1063px;top:390px;font-size:11px;line-height:13px;color:#000;letter-spacing:-0.30px;">Func:</div>
<div class="ed" style="left:1103px;top:389px;width:239px;height:19px;background:#fff"></div>
<div class="rb" style="left:1324px;top:391px;width:17px;height:16px;background:#f0f0f0"></div>
<div class="a" style="left:1328px;top:398px;width:0;height:0;border-left:4px solid transparent;border-right:4px solid transparent;border-top:4px solid #000"></div>
<div class="t" style="left:1106px;top:393px;font-size:11px;line-height:13px;color:#000;">Nenhum</div>
<div class="t" style="left:487px;top:414px;font-size:11px;line-height:13px;color:#000;letter-spacing:-0.30px;">Transp.:</div>
<div class="ed" style="left:543px;top:413px;width:48px;height:18px;background:#fff"></div>
<div class="t" style="left:546px;top:416px;font-size:11px;line-height:13px;color:#000;">0</div>
<div class="ed" style="left:599px;top:413px;width:295px;height:19px;background:#fff"></div>
<div class="rb" style="left:876px;top:415px;width:17px;height:16px;background:#f0f0f0"></div>
<div class="a" style="left:880px;top:422px;width:0;height:0;border-left:4px solid transparent;border-right:4px solid transparent;border-top:4px solid #000"></div>
<div class="t" style="left:602px;top:417px;font-size:11px;line-height:13px;color:#000;">Nenhuma</div>
<div class="t" style="left:903px;top:414px;font-size:11px;line-height:13px;color:#000;letter-spacing:-0.30px;">Conta Op:</div>
<div class="ed" style="left:959px;top:413px;width:88px;height:18px;background:#f0f0f0"></div>
<div class="t" style="left:959px;top:416px;font-size:11px;line-height:13px;color:#8a8a8a;width:86px;text-align:right;">2.1.1</div>
<div class="ed" style="left:1055px;top:413px;width:287px;height:19px;background:#fff"></div>
<div class="rb" style="left:1324px;top:415px;width:17px;height:16px;background:#f0f0f0"></div>
<div class="a" style="left:1328px;top:422px;width:0;height:0;border-left:4px solid transparent;border-right:4px solid transparent;border-top:4px solid #a0a0a0"></div>
<div class="t" style="left:1058px;top:417px;font-size:11px;line-height:13px;color:#6d6d6d;">Vendas de Mercadoria</div>
<div class="t" style="left:487px;top:438px;font-size:11px;line-height:13px;color:#000;letter-spacing:-0.24px;">Observação:</div>
<div class="ed" style="left:559px;top:437px;width:760px;height:18px;background:#fff"></div>
<div class="rb" style="left:1327px;top:437px;width:13px;height:17px;background:#f0f0f0"></div>
<svg class="a" style="left:1330px;top:441px" width="7" height="7" viewBox="0 0 7 7"><path d="M3.5 0.5 V6.5 M0.5 3.5 H6.5" stroke="#000" stroke-width="1.2"/></svg>
<div class="t" style="left:487px;top:461px;font-size:11px;line-height:13px;color:#000;letter-spacing:-0.29px;">Meio Pgto:</div>
<div class="ed" style="left:559px;top:461px;width:40px;height:18px;background:#fff"></div>
<div class="t" style="left:562px;top:464px;font-size:11px;line-height:13px;color:#000;">0</div>
<div class="ed" style="left:607px;top:461px;width:255px;height:20px;background:#fff"></div>
<div class="rb" style="left:844px;top:463px;width:17px;height:17px;background:#f0f0f0"></div>
<div class="a" style="left:848px;top:470px;width:0;height:0;border-left:4px solid transparent;border-right:4px solid transparent;border-top:4px solid #000"></div>
<div class="t" style="left:610px;top:465px;font-size:11px;line-height:13px;color:#000;">Nenhum</div>
<div class="rb" style="left:871px;top:462px;width:81px;height:20px;background:#f0f0f0"></div>
<div class="t" style="left:871px;top:466px;width:81px;text-align:center;font-size:11px;line-height:13px;color:#000">Pagamentos</div>
<div class="t" style="left:495px;top:482px;font-size:11px;line-height:13px;color:#000080;letter-spacing:-0.30px;">Informações</div>
<div class="a" style="left:559px;top:488px;width:785px;height:2px;background:#000080"></div>
<div class="t" style="left:488px;top:501px;font-size:12px;line-height:13px;color:#ff0000;font-weight:bold;letter-spacing:0.15px;">Tabela: NORMAL - Desc. Máx.: 20,00%</div>
<div class="t" style="left:488px;top:517px;font-size:12px;line-height:13px;color:#4a0000;font-weight:bold;">0 Dias Corrido (à época)</div>
<div class="rb" style="left:1360px;top:269px;width:72px;height:24px;background:#f0f0f0"></div>
<div class="t" style="left:1360px;top:275px;width:72px;text-align:center;font-size:11px;line-height:13px;color:#000"><u>I</u>ncluir</div>
<div class="rb" style="left:1360px;top:293px;width:72px;height:24px;background:#f0f0f0"></div>
<div class="t" style="left:1360px;top:299px;width:72px;text-align:center;font-size:11px;line-height:13px;color:#a0a0a0"><u>A</u>lterar</div>
<div class="rb" style="left:1360px;top:317px;width:72px;height:24px;background:#f0f0f0"></div>
<div class="t" style="left:1360px;top:323px;width:72px;text-align:center;font-size:11px;line-height:13px;color:#000"><u>L</u>ocalizar...</div>
<div class="rb" style="left:1360px;top:341px;width:72px;height:24px;background:#f0f0f0"></div>
<div class="t" style="left:1360px;top:347px;width:72px;text-align:center;font-size:11px;line-height:13px;color:#a0a0a0">A<u>n</u>ular</div>
<div class="rb" style="left:1360px;top:365px;width:72px;height:24px;background:#f0f0f0"></div>
<div class="t" style="left:1360px;top:371px;width:72px;text-align:center;font-size:11px;line-height:13px;color:#a0a0a0"><u>G</u>ravar</div>
<div class="rb" style="left:1360px;top:389px;width:72px;height:24px;background:#f0f0f0"></div>
<div class="t" style="left:1360px;top:395px;width:72px;text-align:center;font-size:11px;line-height:13px;color:#000"><u>E</u>xcluir</div>
<div class="rb" style="left:1360px;top:413px;width:72px;height:24px;background:#f0f0f0"></div>
<div class="t" style="left:1360px;top:419px;width:72px;text-align:center;font-size:11px;line-height:13px;color:#000"><u>C</u>ancelar</div>
<div class="rb" style="left:1360px;top:437px;width:18px;height:24px;background:#f0f0f0"></div>
<svg class="a" style="left:1362px;top:442px" width="14" height="14" viewBox="0 0 14 14"><path d="M4.5 3 V11 M10 3 L6 7 L10 11" stroke="#000" stroke-width="1.1" fill="none"/></svg>
<div class="rb" style="left:1378px;top:437px;width:18px;height:24px;background:#f0f0f0"></div>
<svg class="a" style="left:1380px;top:442px" width="14" height="14" viewBox="0 0 14 14"><path d="M9 3 L5 7 L9 11" stroke="#000" stroke-width="1.1" fill="none"/></svg>
<div class="rb" style="left:1396px;top:437px;width:18px;height:24px;background:#f0f0f0"></div>
<svg class="a" style="left:1398px;top:442px" width="14" height="14" viewBox="0 0 14 14"><path d="M5 3 L9 7 L5 11" stroke="#000" stroke-width="1.1" fill="none"/></svg>
<div class="rb" style="left:1414px;top:437px;width:18px;height:24px;background:#f0f0f0"></div>
<svg class="a" style="left:1416px;top:442px" width="14" height="14" viewBox="0 0 14 14"><path d="M4 3 L8 7 L4 11 M9.5 3 V11" stroke="#000" stroke-width="1.1" fill="none"/></svg>
<div class="ed" style="left:487px;top:541px;width:105px;height:18px;background:#fff"></div>
<div class="rb" style="left:598px;top:541px;width:18px;height:17px;background:#f0f0f0"></div>
<svg class="a" style="left:599px;top:542px" width="16" height="16" viewBox="0 0 16 16"><circle cx="6.5" cy="6.5" r="4.3" fill="none" stroke="#000" stroke-width="2"/><path d="M9.5 9.5 L14 14" stroke="#000" stroke-width="3" stroke-linecap="round"/></svg>
<div class="t" style="left:1112px;top:542px;font-size:11px;line-height:13px;color:#000;font-weight:bold;letter-spacing:0.3px;">R$</div>
<div class="ed" style="left:1135px;top:541px;width:81px;height:18px;background:#fff"></div>
<div class="t" style="left:1224px;top:542px;font-size:11px;line-height:13px;color:#000;font-weight:bold;letter-spacing:0.3px;">Qtde</div>
<div class="ed" style="left:1255px;top:541px;width:65px;height:18px;background:#fff"></div>
<div class="rb" style="left:1327px;top:541px;width:17px;height:17px;background:#f0f0f0"></div>
<svg class="a" style="left:1328px;top:542px" width="15" height="15" viewBox="0 0 15 15"><path d="M7.5 1.5 V13.5 M1.5 7.5 H13.5" stroke="#000" stroke-width="3.2"/></svg>
<div class="a" style="left:487px;top:565px;width:863px;height:154px;background:#c0c0c0;border-style:solid;border-width:1px;border-color:#a0a0a0 #fff #fff #a0a0a0;box-shadow:inset -1px -1px 0 #6a6a6a"></div>
<div class="a" style="left:487px;top:566px;width:22px;height:18px;background:#f0f0f0;border-style:solid;border-width:1px 2px 2px 1px;border-color:#fff #7a7a7a #7a7a7a #fff"></div>
<div class="a" style="left:509px;top:566px;width:126px;height:18px;background:#f0f0f0;border-style:solid;border-width:1px 2px 2px 1px;border-color:#fff #7a7a7a #7a7a7a #fff"></div>
<div class="t" style="left:513px;top:569px;font-size:11px;line-height:13px;color:#000;">Referência</div>
<div class="a" style="left:635px;top:566px;width:159px;height:18px;background:#f0f0f0;border-style:solid;border-width:1px 2px 2px 1px;border-color:#fff #7a7a7a #7a7a7a #fff"></div>
<div class="t" style="left:639px;top:569px;font-size:11px;line-height:13px;color:#000;">Descrição</div>
<div class="a" style="left:794px;top:566px;width:23px;height:18px;background:#f0f0f0;border-style:solid;border-width:1px 2px 2px 1px;border-color:#fff #7a7a7a #7a7a7a #fff"></div>
<div class="t" style="left:798px;top:569px;font-size:11px;line-height:13px;color:#000;">UN</div>
<div class="a" style="left:817px;top:566px;width:53px;height:18px;background:#f0f0f0;border-style:solid;border-width:1px 2px 2px 1px;border-color:#fff #7a7a7a #7a7a7a #fff"></div>
<div class="t" style="left:817px;top:569px;font-size:11px;line-height:13px;color:#000;letter-spacing:-0.30px;width:49px;text-align:right;">Qtde.</div>
<div class="a" style="left:870px;top:566px;width:77px;height:18px;background:#f0f0f0;border-style:solid;border-width:1px 2px 2px 1px;border-color:#fff #7a7a7a #7a7a7a #fff"></div>
<div class="t" style="left:870px;top:569px;font-size:11px;line-height:13px;color:#000;letter-spacing:-0.24px;width:73px;text-align:right;">Vlr. Unitário</div>
<div class="a" style="left:947px;top:566px;width:59px;height:18px;background:#f0f0f0;border-style:solid;border-width:1px 2px 2px 1px;border-color:#fff #7a7a7a #7a7a7a #fff"></div>
<div class="t" style="left:947px;top:569px;font-size:11px;line-height:13px;color:#000;width:55px;text-align:right;">Vlr.Total</div>
<div class="a" style="left:1006px;top:566px;width:39px;height:18px;background:#f0f0f0;border-style:solid;border-width:1px 2px 2px 1px;border-color:#fff #7a7a7a #7a7a7a #fff"></div>
<div class="t" style="left:1006px;top:569px;font-size:11px;line-height:13px;color:#000;letter-spacing:-0.30px;width:35px;text-align:right;">ICMS</div>
<div class="a" style="left:1045px;top:566px;width:33px;height:18px;background:#f0f0f0;border-style:solid;border-width:1px 2px 2px 1px;border-color:#fff #7a7a7a #7a7a7a #fff"></div>
<div class="t" style="left:1045px;top:569px;font-size:11px;line-height:13px;color:#000;width:29px;text-align:right;">IPI</div>
<div class="a" style="left:1078px;top:566px;width:52px;height:18px;background:#f0f0f0;border-style:solid;border-width:1px 2px 2px 1px;border-color:#fff #7a7a7a #7a7a7a #fff"></div>
<div class="t" style="left:1078px;top:569px;font-size:11px;line-height:13px;color:#000;width:48px;text-align:right;">Saldo</div>
<div class="a" style="left:1130px;top:566px;width:59px;height:18px;background:#f0f0f0;border-style:solid;border-width:1px 2px 2px 1px;border-color:#fff #7a7a7a #7a7a7a #fff"></div>
<div class="t" style="left:1134px;top:569px;font-size:11px;line-height:13px;color:#000;letter-spacing:-0.30px;">Compleme</div>
<div class="a" style="left:1189px;top:566px;width:15px;height:18px;background:#f0f0f0;border-style:solid;border-width:1px 2px 2px 1px;border-color:#fff #7a7a7a #7a7a7a #fff"></div>
<div class="t" style="left:1193px;top:569px;font-size:11px;line-height:13px;color:#000;">R</div>
<div class="a" style="left:1204px;top:566px;width:32px;height:18px;background:#f0f0f0;border-style:solid;border-width:1px 2px 2px 1px;border-color:#fff #7a7a7a #7a7a7a #fff"></div>
<div class="t" style="left:1208px;top:569px;font-size:11px;line-height:13px;color:#000;">D</div>
<div class="a" style="left:1236px;top:566px;width:53px;height:18px;background:#f0f0f0;border-style:solid;border-width:1px 2px 2px 1px;border-color:#fff #7a7a7a #7a7a7a #fff"></div>
<div class="t" style="left:1240px;top:569px;font-size:11px;line-height:13px;color:#000;">ST</div>
<div class="a" style="left:1289px;top:566px;width:54px;height:18px;background:#f0f0f0;border-style:solid;border-width:1px 2px 2px 1px;border-color:#fff #7a7a7a #7a7a7a #fff"></div>
<div class="t" style="left:1293px;top:569px;font-size:11px;line-height:13px;color:#000080;letter-spacing:-0.30px;">Base ST</div>
<div class="a" style="left:1343px;top:566px;width:6px;height:18px;background:#f0f0f0;border-style:solid;border-width:1px 2px 2px 1px;border-color:#fff #7a7a7a #7a7a7a #fff"></div>
<div class="a" style="left:487px;top:584px;width:22px;height:25px;background:#f0f0f0;border-style:solid;border-width:1px 2px 2px 1px;border-color:#fff #7a7a7a #7a7a7a #fff"></div>
<div class="a" style="left:509px;top:584px;width:126px;height:25px;background:#fff;border-right:1px solid #a0a0a0;border-bottom:1px solid #a0a0a0;"></div>
<div class="a" style="left:635px;top:584px;width:159px;height:25px;background:#fff;border-right:1px solid #a0a0a0;border-bottom:1px solid #a0a0a0;"></div>
<div class="a" style="left:794px;top:584px;width:23px;height:25px;background:#c0c0c0;border-right:1px solid #a0a0a0;border-bottom:1px solid #a0a0a0;"></div>
<div class="a" style="left:817px;top:584px;width:53px;height:25px;background:#fff;border-right:1px solid #a0a0a0;border-bottom:1px solid #a0a0a0;"></div>
<div class="a" style="left:870px;top:584px;width:77px;height:25px;background:#fff;border-right:1px solid #a0a0a0;border-bottom:1px solid #a0a0a0;"></div>
<div class="a" style="left:947px;top:584px;width:59px;height:25px;background:#c0c0c0;border-right:1px solid #a0a0a0;border-bottom:1px solid #a0a0a0;"></div>
<div class="a" style="left:1006px;top:584px;width:39px;height:25px;background:#fff;border-right:1px solid #a0a0a0;border-bottom:1px solid #a0a0a0;"></div>
<div class="a" style="left:1045px;top:584px;width:33px;height:25px;background:#fff;border-right:1px solid #a0a0a0;border-bottom:1px solid #a0a0a0;"></div>
<div class="a" style="left:1078px;top:584px;width:52px;height:25px;background:#c0c0c0;border-right:1px solid #a0a0a0;border-bottom:1px solid #a0a0a0;"></div>
<div class="a" style="left:1130px;top:584px;width:59px;height:25px;background:#fff;border-right:1px solid #a0a0a0;border-bottom:1px solid #a0a0a0;"></div>
<div class="a" style="left:1189px;top:584px;width:15px;height:25px;background:#c0c0c0;border-right:1px solid #a0a0a0;border-bottom:1px solid #a0a0a0;"></div>
<div class="a" style="left:1204px;top:584px;width:32px;height:25px;background:#fff;border-right:1px solid #a0a0a0;border-bottom:1px solid #a0a0a0;"></div>
<div class="a" style="left:1236px;top:584px;width:53px;height:25px;background:#c0c0c0;border-right:1px solid #a0a0a0;border-bottom:1px solid #a0a0a0;"></div>
<div class="a" style="left:1289px;top:584px;width:54px;height:25px;background:#c0c0c0;border-right:1px solid #a0a0a0;border-bottom:1px solid #a0a0a0;"></div>
<div class="a" style="left:1343px;top:584px;width:6px;height:25px;background:#c0c0c0;border-right:1px solid #a0a0a0;border-bottom:1px solid #a0a0a0;"></div>
<div class="a" style="left:487px;top:609px;width:22px;height:27px;background:#f0f0f0;border-style:solid;border-width:1px 2px 2px 1px;border-color:#fff #7a7a7a #7a7a7a #fff"></div>
<div class="a" style="left:509px;top:609px;width:126px;height:27px;background:#fff;border-right:1px solid #a0a0a0;border-bottom:1px solid #a0a0a0;"></div>
<div class="a" style="left:635px;top:609px;width:159px;height:27px;background:#fff;border-right:1px solid #a0a0a0;border-bottom:1px solid #a0a0a0;"></div>
<div class="a" style="left:794px;top:609px;width:23px;height:27px;background:#c0c0c0;border-right:1px solid #a0a0a0;border-bottom:1px solid #a0a0a0;"></div>
<div class="a" style="left:817px;top:609px;width:53px;height:27px;background:#fff;border-right:1px solid #a0a0a0;border-bottom:1px solid #a0a0a0;"></div>
<div class="a" style="left:870px;top:609px;width:77px;height:27px;background:#fff;border-right:1px solid #a0a0a0;border-bottom:1px solid #a0a0a0;"></div>
<div class="a" style="left:947px;top:609px;width:59px;height:27px;background:#c0c0c0;border-right:1px solid #a0a0a0;border-bottom:1px solid #a0a0a0;"></div>
<div class="a" style="left:1006px;top:609px;width:39px;height:27px;background:#fff;border-right:1px solid #a0a0a0;border-bottom:1px solid #a0a0a0;"></div>
<div class="a" style="left:1045px;top:609px;width:33px;height:27px;background:#fff;border-right:1px solid #a0a0a0;border-bottom:1px solid #a0a0a0;"></div>
<div class="a" style="left:1078px;top:609px;width:52px;height:27px;background:#c0c0c0;border-right:1px solid #a0a0a0;border-bottom:1px solid #a0a0a0;"></div>
<div class="a" style="left:1130px;top:609px;width:59px;height:27px;background:#fff;border-right:1px solid #a0a0a0;border-bottom:1px solid #a0a0a0;"></div>
<div class="a" style="left:1189px;top:609px;width:15px;height:27px;background:#c0c0c0;border-right:1px solid #a0a0a0;border-bottom:1px solid #a0a0a0;"></div>
<div class="a" style="left:1204px;top:609px;width:32px;height:27px;background:#fff;border-right:1px solid #a0a0a0;border-bottom:1px solid #a0a0a0;"></div>
<div class="a" style="left:1236px;top:609px;width:53px;height:27px;background:#c0c0c0;border-right:1px solid #a0a0a0;border-bottom:1px solid #a0a0a0;"></div>
<div class="a" style="left:1289px;top:609px;width:54px;height:27px;background:#c0c0c0;border-right:1px solid #a0a0a0;border-bottom:1px solid #a0a0a0;"></div>
<div class="a" style="left:1343px;top:609px;width:6px;height:27px;background:#c0c0c0;border-right:1px solid #a0a0a0;border-bottom:1px solid #a0a0a0;"></div>
<div class="a" style="left:509px;top:584px;width:834px;height:25px;border-top:1px dotted #000;border-bottom:1px dotted #000;"></div>
<div class="a" style="left:496px;top:591px;width:0;height:0;border-top:5.5px solid transparent;border-bottom:5.5px solid transparent;border-left:6px solid #000"></div>
<svg class="a" style="left:494px;top:618px" width="9" height="9" viewBox="0 0 9 9"><path d="M4.5 0 V9 M0 4.5 H9 M1.2 1.2 L7.8 7.8 M7.8 1.2 L1.2 7.8" stroke="#000" stroke-width="1.2"/></svg>
<div class="t" style="left:512px;top:586px;font-size:11px;line-height:13px;color:#000;">10</div>
<div class="t" style="left:638px;top:586px;font-size:11px;line-height:13px;color:#000;">Conector SMA femea</div>
<div class="t" style="left:797px;top:586px;font-size:11px;line-height:13px;color:#000;">PC</div>
<div class="t" style="left:817px;top:586px;font-size:11px;line-height:13px;color:#000;width:50px;text-align:right;">1,000</div>
<div class="t" style="left:870px;top:586px;font-size:11px;line-height:13px;color:#000;width:57px;text-align:right;">14,750</div>
<div class="t" style="left:947px;top:586px;font-size:11px;line-height:13px;color:#000;width:56px;text-align:right;">14,750</div>
<div class="t" style="left:1006px;top:586px;font-size:11px;line-height:13px;color:#000;width:36px;text-align:right;">17,00</div>
<div class="t" style="left:1045px;top:586px;font-size:11px;line-height:13px;color:#000;width:30px;text-align:right;">0,00</div>
<div class="t" style="left:1078px;top:586px;font-size:11px;line-height:13px;color:#000;width:49px;text-align:right;">18,000</div>
<div class="t" style="left:1192px;top:586px;font-size:11px;line-height:13px;color:#000;">N</div>
<div class="t" style="left:1207px;top:586px;font-size:11px;line-height:13px;color:#000;">0,00</div>
<div class="t" style="left:1239px;top:586px;font-size:11px;line-height:13px;color:#000;">0</div>
<div class="t" style="left:1292px;top:586px;font-size:11px;line-height:13px;color:#000;">0</div>
<div class="a" style="left:635px;top:597px;width:158px;height:11px;overflow:hidden"><div class="t" style="left:3px;top:0px;font-size:11px;line-height:13px">reverso RG58 crimpar</div></div>
<div class="a" style="left:488px;top:701px;width:860px;height:17px;background:repeating-conic-gradient(#fcfcfc 0 25%, #ececec 0 50%) 0 0/2px 2px"></div>
<div class="rb" style="left:488px;top:701px;width:17px;height:17px;background:#f0f0f0"></div>
<div class="a" style="left:494px;top:706px;width:0;height:0;border-top:4px solid transparent;border-bottom:4px solid transparent;border-right:4px solid #000"></div>
<div class="rb" style="left:505px;top:701px;width:17px;height:17px;background:#f0f0f0"></div>
<div class="rb" style="left:1332px;top:701px;width:17px;height:17px;background:#f0f0f0"></div>
<div class="a" style="left:1339px;top:706px;width:0;height:0;border-top:4px solid transparent;border-bottom:4px solid transparent;border-left:4px solid #000"></div>
<div class="a" style="left:487px;top:725px;width:864px;height:64px;border-style:solid;border-width:2px 1px 1px 2px;border-color:#808080 #fff #fff #808080"></div>
<div class="t" style="left:495px;top:733px;font-size:11px;line-height:13px;color:#000;width:208px;overflow:hidden;">Valor Bruto (001 Itens) ........................................................................................................................................................................................................</div>
<div class="t" style="left:693px;top:733px;font-size:11px;line-height:13px;color:#000;width:60px;text-align:right;">14,75</div>
<div class="t" style="left:495px;top:751px;font-size:11px;line-height:13px;color:#000;width:213px;overflow:hidden;">Valor Serviço ........................................................................................................................................................................................................</div>
<div class="t" style="left:693px;top:751px;font-size:11px;line-height:13px;color:#000;width:60px;text-align:right;">0,00</div>
<div class="t" style="left:1055px;top:733px;font-size:11px;line-height:13px;color:#000;width:233px;overflow:hidden;">Valor Acréscimo ........................................................................................................................................................................................................</div>
<div class="t" style="left:1277px;top:733px;font-size:11px;line-height:13px;color:#000;width:60px;text-align:right;">0,00</div>
<div class="t" style="left:1055px;top:751px;font-size:11px;line-height:13px;color:#000;width:236px;overflow:hidden;">Valor Desconto ........................................................................................................................................................................................................</div>
<div class="t" style="left:1277px;top:751px;font-size:11px;line-height:13px;color:#ff0000;width:60px;text-align:right;">0,00</div>
<div class="t" style="left:1055px;top:769px;font-size:11px;line-height:13px;color:#000;width:241px;overflow:hidden;">Valor Líquido ........................................................................................................................................................................................................</div>
<div class="t" style="left:1277px;top:769px;font-size:11px;line-height:13px;color:#000;width:60px;text-align:right;">14,75</div>
<div class="t" style="left:991px;top:798px;font-size:10.6px;line-height:13px;color:#1010d8;">Incluso/Alterado por Administrador</div>
<div class="rb" style="left:1263px;top:797px;width:81px;height:33px;background:#f0f0f0"></div>
<div class="t" style="left:1263px;top:801px;width:80px;text-align:center;font-size:11px;line-height:13px">Detalhes<br>Mercadorias</div>
<div class="t" style="left:1372px;top:514px;font-size:11.5px;line-height:13px;color:#000080;">Busca I<u>t</u>em</div>
<div class="t" style="left:1380px;top:570px;font-size:11.5px;line-height:13px;color:#000080;"><u>S</u>erviço</div>
<div class="t" style="left:1361px;top:625px;font-size:11.5px;line-height:13px;color:#000080;"><u>F</u>orma Pagto.</div>
<div class="t" style="left:1367px;top:682px;font-size:11.5px;line-height:13px;color:#000080;">N<u>o</u>ta Fiscal</div>
<div class="t" style="left:1373px;top:738px;font-size:11.5px;line-height:13px;color:#000080;"><u>B</u>loqueto</div>
<svg class="a" style="left:1386px;top:487px" width="27" height="27" viewBox="0 0 27 27">
<rect x="1" y="3" width="20" height="22" fill="#bcdcf5"/><rect x="1" y="1" width="20" height="3" fill="#5470b0"/>
<g fill="#3a8fd0"><rect x="4" y="8" width="2" height="2"/><rect x="7" y="8" width="10" height="2"/><rect x="4" y="12" width="2" height="2"/><rect x="7" y="12" width="8" height="2"/><rect x="4" y="16" width="2" height="2"/><rect x="7" y="16" width="6" height="2"/><rect x="4" y="20" width="2" height="2"/><rect x="7" y="20" width="5" height="2"/></g>
<circle cx="18" cy="18" r="5" fill="#cfe6f7" stroke="#555" stroke-width="2"/><path d="M21.5 21.5 L26 26" stroke="#3a7a50" stroke-width="2"/></svg>
<svg class="a" style="left:1385px;top:543px" width="30" height="30" viewBox="0 0 30 30">
<path d="M27 4 A7 7 0 0 1 19 14 L6 27 A2.8 2.8 0 0 1 2 23 L15 10 A7 7 0 0 1 24 1 L20 6 L24 9 Z" fill="#777"/><circle cx="4.5" cy="25" r="1.4" fill="#fff"/></svg>
<svg class="a" style="left:1382px;top:601px" width="28" height="26" viewBox="0 0 28 26">
<path d="M1 8 L20 1 L25 12 L6 19 Z" fill="#2f6b33"/><path d="M4 9 L19 4 L22 11 L7 16 Z" fill="#7aa36f"/><ellipse cx="13" cy="10" rx="4" ry="2.5" fill="#2f6b33"/>
<rect x="5" y="11" width="22" height="14" fill="#2f6b33"/><rect x="7" y="13" width="18" height="10" fill="#a9d09a"/><ellipse cx="16" cy="18" rx="5" ry="4" fill="#3f7f43"/><circle cx="9.5" cy="18" r="1" fill="#2f6b33"/><circle cx="22.5" cy="18" r="1" fill="#2f6b33"/></svg>
<svg class="a" style="left:1385px;top:656px" width="22" height="28" viewBox="0 0 22 28">
<rect x="0" y="0" width="22" height="28" fill="#c7d0ee"/><rect x="4" y="3" width="14" height="2" fill="#5570b8"/>
<g fill="#5570b8"><rect x="3" y="8" width="2" height="1.5"/><rect x="6" y="8" width="8" height="1.5"/><rect x="16" y="8" width="3" height="1.5"/><rect x="3" y="11" width="2" height="1.5"/><rect x="6" y="11" width="6" height="1.5"/><rect x="16" y="11" width="3" height="1.5"/><rect x="3" y="14" width="2" height="1.5"/><rect x="6" y="14" width="9" height="1.5"/><rect x="16" y="14" width="3" height="1.5"/><rect x="3" y="17" width="2" height="1.5"/><rect x="6" y="17" width="5" height="1.5"/><rect x="16" y="17" width="3" height="1.5"/><rect x="12" y="24" width="6" height="1.5"/></g>
<rect x="0" y="21" width="22" height="1" fill="#9aa6d6"/></svg>
<svg class="a" style="left:1382px;top:715px" width="28" height="21" viewBox="0 0 28 21">
<rect x="0" y="0" width="28" height="21" fill="#c7d0ee"/><rect x="5" y="2" width="18" height="2" fill="#5570b8"/>
<rect x="3" y="6" width="22" height="10" fill="#e8ecf8" stroke="#9aa6d6" stroke-width="1"/><path d="M3 11 H25 M14 6 V16" stroke="#9aa6d6" stroke-width="1"/><rect x="19" y="17" width="6" height="1.5" fill="#5570b8"/></svg>
<div class="a" style="left:487px;top:805px;width:25px;height:25px;background:#c0c0c0"></div>
<div class="a" style="left:559px;top:805px;width:25px;height:25px;background:#c0c0c0"></div>
<div class="a" style="left:591px;top:805px;width:25px;height:25px;background:#c0c0c0"></div>
<div class="a" style="left:631px;top:805px;width:25px;height:25px;background:#c0c0c0"></div>
<div class="a" style="left:663px;top:805px;width:25px;height:25px;background:#c0c0c0"></div>
<div class="a" style="left:695px;top:805px;width:25px;height:25px;background:#c0c0c0"></div>
<div class="a" style="left:727px;top:805px;width:25px;height:25px;background:#c0c0c0"></div>
<div class="a" style="left:759px;top:805px;width:25px;height:25px;background:#c0c0c0"></div>
<div class="a" style="left:791px;top:805px;width:24px;height:20px;background:#c0c0c0"></div>
<svg class="a" style="left:487px;top:805px" width="25" height="25" viewBox="0 0 25 25">
<rect x="8" y="0" width="7" height="2" fill="#000"/><rect x="9" y="2" width="5" height="5" fill="#fff" stroke="#000" stroke-width="1"/><rect x="5" y="7" width="12" height="2.5" fill="#fff" stroke="#000" stroke-width="1"/><rect x="10.5" y="9.5" width="1.5" height="9" fill="#000"/>
<path d="M1 17 L8 12 L11 17 L5 21 Z" fill="#e00" stroke="#000" stroke-width="1"/><path d="M4 24 L9 18 M7 19 L12 24" stroke="#000" stroke-width="1.5"/>
<path d="M15 12 L22 6 L24 9 L18 15 Z" fill="#0aa" stroke="#000" stroke-width="1"/><path d="M16 14 L12 19" stroke="#000" stroke-width="1.5"/></svg>
<svg class="a" style="left:519px;top:805px" width="33" height="17" viewBox="0 0 33 17">
<rect x="0.5" y="0.5" width="26" height="16" rx="1" fill="#008080" stroke="#000" stroke-width="1"/><rect x="4" y="3" width="15" height="2.5" fill="#fff"/>
<g fill="#fff"><rect x="4" y="8" width="2" height="1.5"/><rect x="8" y="8" width="2" height="1.5"/><rect x="12" y="8" width="2" height="1.5"/><rect x="16" y="8" width="2" height="1.5"/><rect x="20" y="8" width="2" height="1.5"/><rect x="4" y="12" width="2" height="1.5"/><rect x="8" y="12" width="2" height="1.5"/><rect x="12" y="12" width="2" height="1.5"/><rect x="16" y="12" width="5" height="1.5"/></g>
<rect x="1" y="14.5" width="25" height="1.5" fill="#0000c0"/><rect x="26" y="0" width="4" height="17" fill="#c0c0c0"/><rect x="31" y="0" width="1" height="17" fill="#fff"/></svg>
<svg class="a" style="left:559px;top:805px" width="25" height="25" viewBox="0 0 25 25">
<path d="M3 12 L12 3 L21 12 L12 21 Z" fill="#ffffe0" stroke="#000" stroke-width="1"/><path d="M8 12 L13 7 M10 14 L15 9 M12 16 L17 11" stroke="#c09000" stroke-width="1"/><circle cx="6" cy="13" r="0.8" fill="#e00"/><circle cx="16" cy="5" r="0.8" fill="#00e"/></svg>
<svg class="a" style="left:591px;top:805px" width="25" height="25" viewBox="0 0 25 25">
<path d="M5 1 L18 15" stroke="#000" stroke-width="2.5"/><path d="M5.5 1.5 L17.5 14.5" stroke="#e0c000" stroke-width="1"/>
<path d="M1 12 Q3 8 9 9 L16 12 L14 15 L7 17 Q2 17 1 14 Z" fill="#fff" stroke="#000" stroke-width="1"/><rect x="0" y="11" width="4" height="6" fill="#2040c0"/>
<path d="M7 20 L18 16 L25 20 L25 25 L7 25 Z" fill="#fff" stroke="#000" stroke-width="1"/><path d="M10 22 L22 19" stroke="#e0c000" stroke-width="1"/><circle cx="21" cy="6" r="2" fill="#fff" stroke="#000"/></svg>
<svg class="a" style="left:631px;top:805px" width="25" height="25" viewBox="0 0 25 25">
<rect x="1" y="3" width="13" height="14" fill="#c0d0e0" stroke="#000" stroke-width="1"/><rect x="4" y="0" width="7" height="3" fill="#000"/><path d="M3 7 H11 M3 10 H10" stroke="#0000e0" stroke-width="1"/>
<path d="M6 14 L9 11 L12 13 L15 10 L18 13 L21 11 L24 14 L22 18 L24 21 L19 23 L16 21 L12 23 L9 20 L6 21 Z" fill="#8a9a60" stroke="#000" stroke-width="1"/><rect x="12" y="6" width="5" height="9" fill="#a0a0a0" stroke="#000" stroke-width="0.8"/></svg>
<svg class="a" style="left:663px;top:805px" width="25" height="25" viewBox="0 0 25 25">
<rect x="2" y="2" width="15" height="13" fill="#fff" stroke="#000" stroke-width="1.5"/><path d="M2 6 H17 M2 10 H17" stroke="#000" stroke-width="1"/><rect x="3" y="3" width="2" height="2" fill="#e00"/><rect x="8" y="3" width="2" height="2" fill="#00e"/><rect x="3" y="7" width="2" height="2" fill="#00e"/><rect x="8" y="7" width="2" height="2" fill="#e00"/>
<path d="M4 10 L4 17 L10 17 L10 20 L14 16 L10 12 L10 15 L6 15 L6 10 Z" fill="#f00"/><rect x="15" y="16" width="3" height="3" fill="#00e"/></svg>
<svg class="a" style="left:695px;top:805px" width="25" height="25" viewBox="0 0 25 25">
<rect x="11" y="0" width="14" height="25" fill="#fff"/><path d="M11 1 H25 M11 6 H25 M11 11 H25 M11 16 H25 M11 21 H25 M11 0 V25" stroke="#000" stroke-width="1"/><rect x="13" y="2" width="3" height="3" fill="#e00"/><rect x="19" y="7" width="3" height="3" fill="#e00"/><rect x="21" y="12" width="3" height="3" fill="#00e"/><rect x="18" y="17" width="3" height="3" fill="#e00"/><rect x="22" y="17" width="2" height="3" fill="#00e"/>
<rect x="3" y="11" width="8" height="3" fill="#000"/><rect x="0.5" y="14" width="13" height="11" fill="#c0c8d8" stroke="#000" stroke-width="1"/><path d="M3 18 H11 M3 21 H10" stroke="#0000e0" stroke-width="1.2"/></svg>
<svg class="a" style="left:727px;top:805px" width="25" height="25" viewBox="0 0 25 25">
<path d="M7 4 H18 L20 10 H5 Z" fill="#fff" stroke="#000" stroke-width="1.3"/><rect x="3" y="10" width="19" height="7" rx="1" fill="#fff" stroke="#000" stroke-width="1.3"/><rect x="6" y="17" width="13" height="3" fill="#fff" stroke="#000" stroke-width="1.2"/><rect x="11" y="13" width="3" height="1" fill="#e0c000"/><path d="M9 6 H16" stroke="#000"/></svg>
<svg class="a" style="left:759px;top:805px" width="25" height="25" viewBox="0 0 25 25">
<rect x="12" y="0" width="13" height="21" fill="#fff"/><path d="M12 1 H25 M12 6 H25 M12 11 H25 M12 16 H25 M12 0 V21" stroke="#000" stroke-width="1"/><rect x="14" y="2" width="3" height="3" fill="#00e"/><rect x="20" y="2" width="3" height="3" fill="#600"/><rect x="15" y="7" width="3" height="3" fill="#e00"/><rect x="21" y="7" width="3" height="3" fill="#fc0"/>
<path d="M7 25 L16 18 L22 13 L25 14 L25 25 Z" fill="#f00"/><path d="M10 23 H20 V16" stroke="#fc0" stroke-width="1" fill="none"/><rect x="1" y="15" width="3" height="3" fill="#00e"/><rect x="5" y="14" width="3" height="3" fill="#fde"/><rect x="0" y="21" width="4" height="4" fill="#e00"/><rect x="4" y="19" width="3" height="3" fill="#fc0"/></svg>
<svg class="a" style="left:791px;top:805px" width="25" height="21" viewBox="0 0 25 21">
<path d="M0 10 L16 0 L25 10 L9 21 Z" fill="#ffffc0" stroke="#000" stroke-width="0.8"/><path d="M0 10 L16 0 L18 2 L2 12 Z" fill="#40c0f0"/><path d="M6 12 L18 5 M9 15 L21 8 M12 18 L23 11 M9 8 L14 17 M14 5 L19 14" stroke="#e0c000" stroke-width="1"/><path d="M20 19 L25 15" stroke="#e00" stroke-width="1.2"/></svg>
<div class="a" style="left:0px;top:1016px;width:492px;height:22px;border-top:1px solid #a0a0a0;"></div>
<div class="t" style="left:3px;top:1022px;font-size:10.7px;line-height:13px;color:#000;">Uso EXCLUSIVO de DOCTOR PET PROD VETERINARIOS LTDA ME (1)</div>
<div class="a" style="left:495px;top:1016px;width:199px;height:22px;border-top:1px solid #a0a0a0;border-left:1px solid #a0a0a0;border-right:1px solid #fff"></div>
<div class="t" style="left:499px;top:1022px;font-size:10.7px;line-height:13px;color:#000;">Administrador (29/01/2026 16:07)</div>
<div class="a" style="left:696px;top:1016px;width:98px;height:22px;border-top:1px solid #a0a0a0;border-left:1px solid #a0a0a0;border-right:1px solid #fff"></div>
<div class="t" style="left:700px;top:1022px;font-size:10.7px;line-height:13px;color:#000;">29/01/2026 16:17</div>
<svg class="a" style="left:1790px;top:0px" width="128" height="20" viewBox="0 0 128 20">
<path d="M8 9.5 H18" stroke="#777" stroke-width="1"/>
<rect x="53.5" y="6.5" width="7" height="7" fill="none" stroke="#777"/><path d="M55.5 6.5 V4.5 H62.5 V11.5 H60.5" fill="none" stroke="#777"/>
<path d="M99 4 L109 14 M109 4 L99 14" stroke="#777" stroke-width="1"/></svg>
<svg class="a" style="left:1px;top:2px" width="17" height="16" viewBox="0 0 17 16">
<g fill="#0e6b5c"><rect x="5.2" y="0.2" width="1.7" height="15.6" rx="0.6"/><rect x="9.8" y="0.2" width="1.7" height="15.6" rx="0.6"/><rect x="0.3" y="3.3" width="15.6" height="10.1" rx="1.5"/></g>
<g fill="#fff"><rect x="2.8" y="5.9" width="1.6" height="1.6"/><rect x="7.1" y="5.9" width="1.6" height="1.6"/><rect x="11.4" y="5.9" width="1.6" height="1.6"/><rect x="2.8" y="9.5" width="1.6" height="1.6"/><rect x="7.1" y="9.5" width="1.6" height="1.6"/><rect x="11.4" y="9.5" width="1.6" height="1.6"/></g></svg>
<svg class="a" style="left:30px;top:141px" width="52" height="56" viewBox="0 0 52 56">
<ellipse cx="25.5" cy="4.5" rx="3" ry="3.5" fill="#e0901a"/>
<path d="M19.8 47 Q19.8 55 25.8 55 Q32 55 32 47 Z" fill="#e0901a"/>
<path d="M25.5 5 C16 5 13 12 13 20 L13 26 Q12.5 30 8.5 34 L2 40 Q-0.5 43.5 3 45 Q25.5 51 48 45 Q51.5 43.5 49 40 L42.5 34 Q38.5 30 38.5 26 L38.5 20 C38.5 12 35 5 25.5 5 Z" fill="#fcc10c"/>
<path d="M2.5 41.5 Q25.5 47.5 48.5 41.5" stroke="#fde3a0" stroke-width="1.3" fill="none"/>
<rect x="14" y="29" width="25" height="13" fill="#fff"/></svg>
<div class="t" style="left:45px;top:171px;font-size:12px;line-height:13px;color:#606060;font-weight:bold;">000</div>
<div class="t" style="left:15px;top:200px;font-size:11px;line-height:13px;color:#000;">Você tem avisos</div>
<svg class="a" style="left:963px;top:556px" width="12" height="19" viewBox="0 0 12 19">
<path d="M0.5 0.5 L0.5 15 L4 11.5 L6.5 17.5 L8.5 16.5 L6 10.5 L11 10.5 Z" fill="#fff" stroke="#4a0000" stroke-width="1"/></svg>
</body></html>
